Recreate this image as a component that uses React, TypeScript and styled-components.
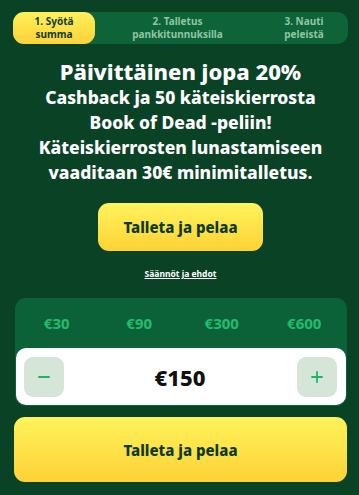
import styled, { createGlobalStyle } from "styled-components";
import { useState } from "react";

const GlobalStyle = createGlobalStyle`
  html, body {
    margin: 0;
    padding: 0;
    background: #0a4226;
  }
  * {
    box-sizing: border-box;
  }
`;

const Page = styled.div`
  width: 359px;
  height: 495px;
  background: #0a4226;
  font-family: "Noto Sans", "Liberation Sans", sans-serif;
  padding: 12px 11px 0 13px;
  display: flex;
  flex-direction: column;
  align-items: center;
`;

const Steps = styled.div`
  width: 335px;
  height: 32px;
  border-radius: 11px;
  background: #0e6338;
  display: grid;
  grid-template-columns: 82px 1fr 88px;
`;

const Step = styled.div<{ $active?: boolean }>`
  display: flex;
  align-items: center;
  justify-content: center;
  text-align: center;
  font-size: 10px;
  line-height: 13px;
  font-weight: 700;
  border-radius: 11px;
  color: ${(p) => (p.$active ? "#0a3d22" : "#8fc6a4")};
  background: ${(p) =>
    p.$active ? "linear-gradient(180deg, #fff05a 0%, #fdd23a 100%)" : "none"};
`;

const Headline = styled.div`
  margin-top: 13px;
  text-align: center;
  color: #ffffff;
  font-weight: 800;
  font-size: 17.5px;
  line-height: 25px;
`;

const HeadlineTop = styled.div`
  font-size: 22px;
  line-height: 28px;
`;

const CtaButton = styled.button<{ $wide?: boolean }>`
  border: none;
  cursor: pointer;
  font-family: inherit;
  font-weight: 800;
  color: #0c3a1f;
  border-radius: 11px;
  background: linear-gradient(180deg, #fff35c 0%, #fdd235 100%);
  width: ${(p) => (p.$wide ? "333px" : "165px")};
  height: ${(p) => (p.$wide ? "65px" : "48px")};
  font-size: 15px;
  margin-top: ${(p) => (p.$wide ? "11px" : "18px")};
`;

const RulesLink = styled.a`
  margin-top: 17px;
  color: #ffffff;
  font-size: 8.5px;
  font-weight: 700;
  text-decoration: underline;
  cursor: pointer;
`;

const Panel = styled.div`
  margin-top: 19px;
  width: 332px;
  border-radius: 11px;
  background: #0c6238;
  padding: 0 1px 1px 1px;
  display: flex;
  flex-direction: column;
`;

const Amounts = styled.div`
  height: 50px;
  display: grid;
  grid-template-columns: repeat(4, 1fr);
  align-items: center;
`;

const Amount = styled.button`
  border: none;
  background: none;
  font-family: inherit;
  font-size: 15px;
  font-weight: 700;
  color: #20bd6c;
  cursor: pointer;
`;

const Stepper = styled.div`
  height: 57px;
  background: #ffffff;
  border-radius: 10px;
  display: flex;
  align-items: center;
  justify-content: space-between;
  padding: 0 9px 0 8px;
`;

const StepperButton = styled.button`
  width: 40px;
  height: 40px;
  border: none;
  border-radius: 9px;
  background: #d5e6d9;
  display: flex;
  align-items: center;
  justify-content: center;
  cursor: pointer;
`;

const Value = styled.div`
  font-size: 22px;
  font-weight: 800;
  color: #111;
`;

export default function App() {
  const [amount, setAmount] = useState(150);

  return (
    <>
      <GlobalStyle />
      <Page>
        <Steps>
          <Step $active>
            1. Syötä
            <br />
            summa
          </Step>
          <Step>
            2. Talletus
            <br />
            pankkitunnuksilla
          </Step>
          <Step>
            3. Nauti
            <br />
            peleistä
          </Step>
        </Steps>
        <Headline>
          <HeadlineTop>Päivittäinen jopa 20%</HeadlineTop>
          Cashback ja 50 käteiskierrosta
          <br />
          Book of Dead -peliin!
          <br />
          Käteiskierrosten lunastamiseen
          <br />
          vaaditaan 30€ minimitalletus.
        </Headline>
        <CtaButton>Talleta ja pelaa</CtaButton>
        <RulesLink>Säännöt ja ehdot</RulesLink>
        <Panel>
          <Amounts>
            {[30, 90, 300, 600].map((v) => (
              <Amount key={v} onClick={() => setAmount(v)}>
                €{v}
              </Amount>
            ))}
          </Amounts>
          <Stepper>
            <StepperButton onClick={() => setAmount((a) => Math.max(0, a - 10))}>
              <svg width="14" height="14" viewBox="0 0 14 14">
                <path d="M2 7h10" stroke="#1fb465" strokeWidth="2" strokeLinecap="round" />
              </svg>
            </StepperButton>
            <Value>€{amount}</Value>
            <StepperButton onClick={() => setAmount((a) => a + 10)}>
              <svg width="14" height="14" viewBox="0 0 14 14">
                <path d="M2 7h10M7 2v10" stroke="#1fb465" strokeWidth="1.8" strokeLinecap="round" />
              </svg>
            </StepperButton>
          </Stepper>
        </Panel>
        <CtaButton $wide>Talleta ja pelaa</CtaButton>
      </Page>
    </>
  );
}
